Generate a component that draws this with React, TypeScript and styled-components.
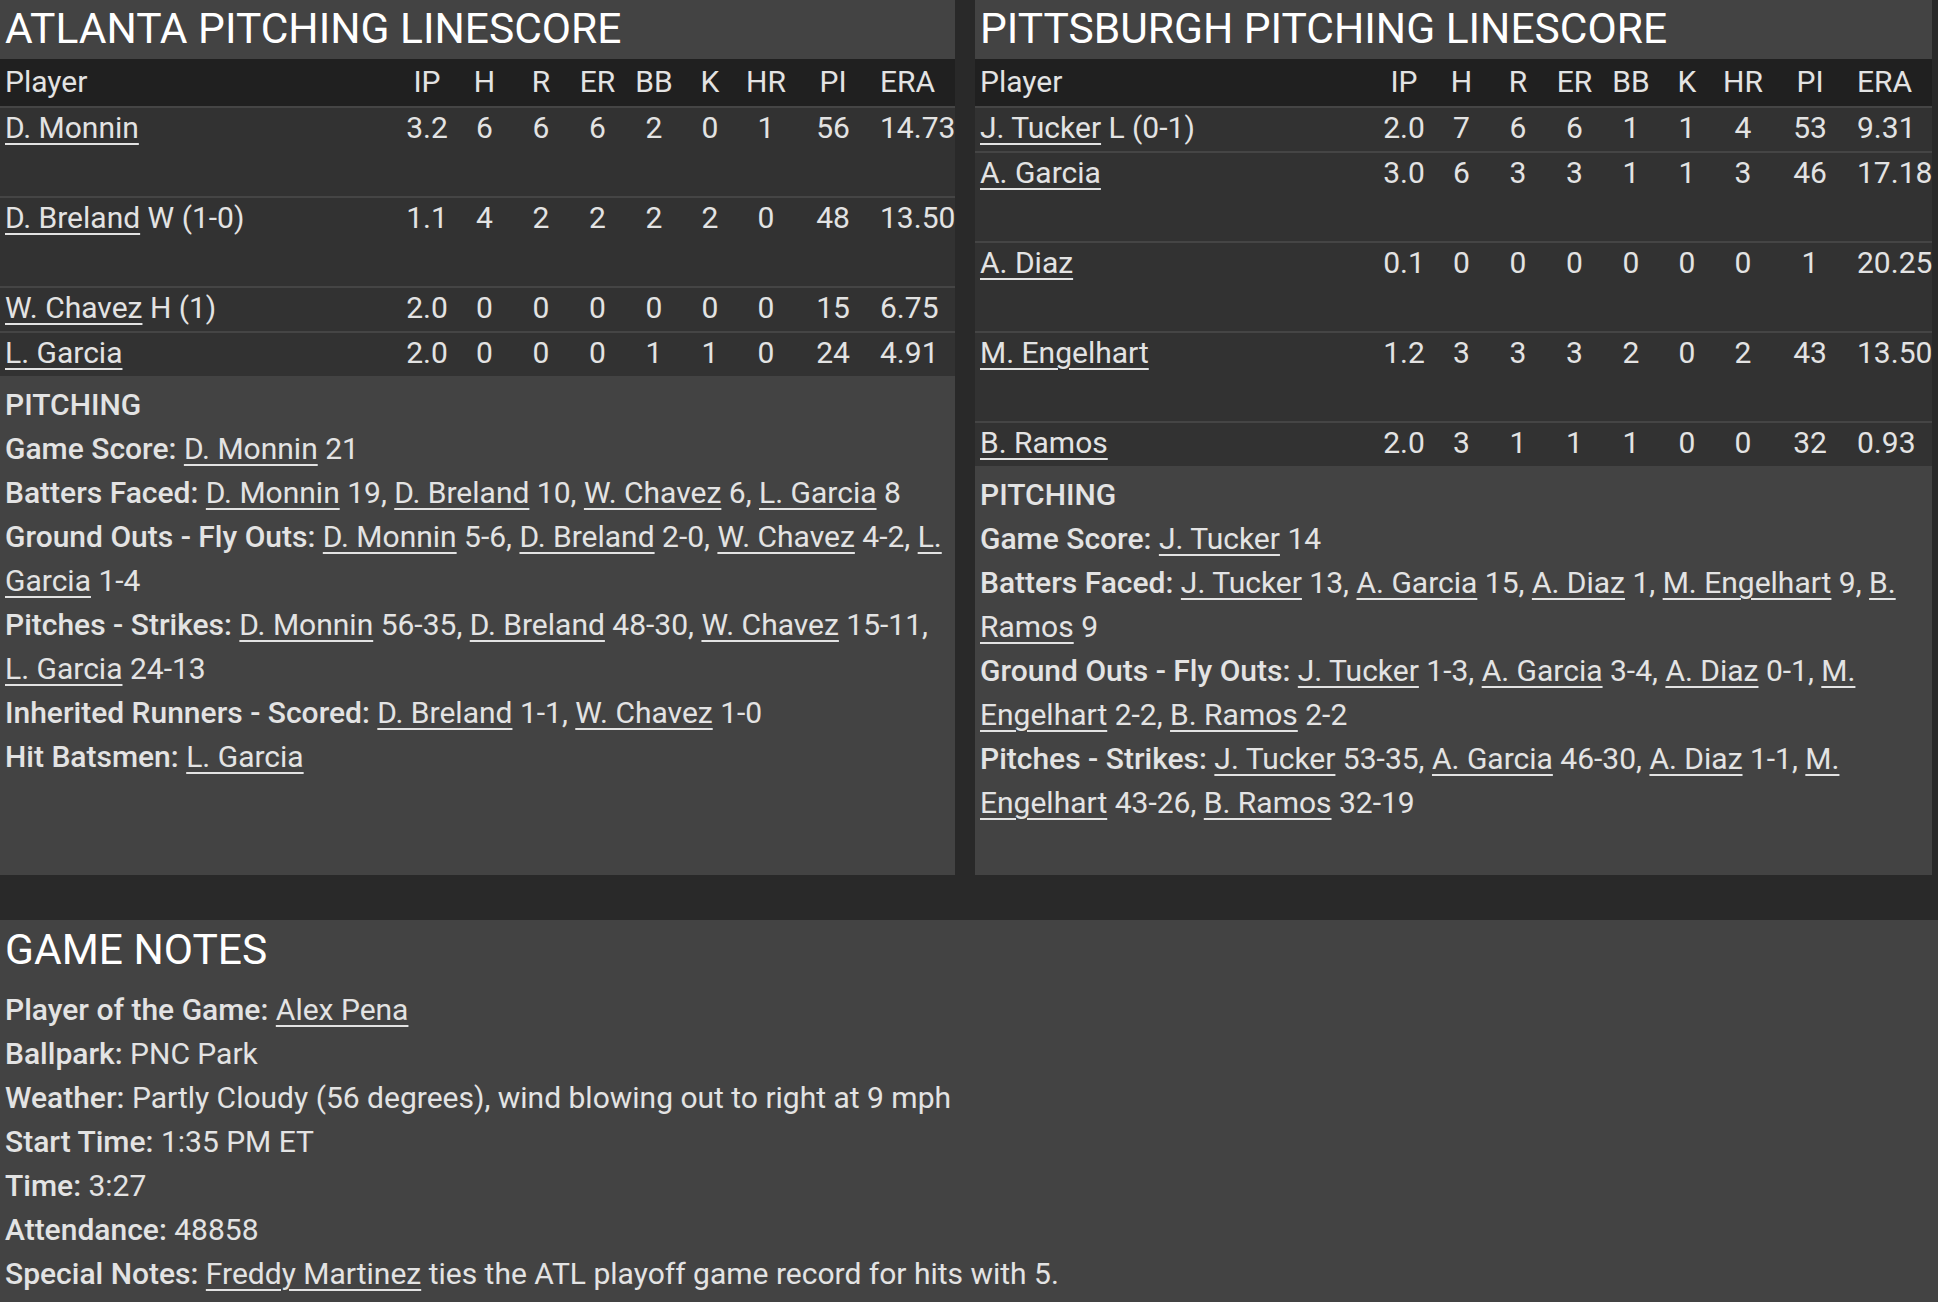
import React from "react";
import styled, { createGlobalStyle } from "styled-components";

type Pitcher = {
  name: string;
  decision?: string;
  stats: string[];
  lines: number;
};

type Note = {
  label: string;
  entries: [string, string][];
};

const columns = ["IP", "H", "R", "ER", "BB", "K", "HR", "PI", "ERA"];

const atlanta: Pitcher[] = [
  { name: "D. Monnin", stats: ["3.2", "6", "6", "6", "2", "0", "1", "56", "14.73"], lines: 2 },
  { name: "D. Breland", decision: "W (1-0)", stats: ["1.1", "4", "2", "2", "2", "2", "0", "48", "13.50"], lines: 2 },
  { name: "W. Chavez", decision: "H (1)", stats: ["2.0", "0", "0", "0", "0", "0", "0", "15", "6.75"], lines: 1 },
  { name: "L. Garcia", stats: ["2.0", "0", "0", "0", "1", "1", "0", "24", "4.91"], lines: 1 },
];

const pittsburgh: Pitcher[] = [
  { name: "J. Tucker", decision: "L (0-1)", stats: ["2.0", "7", "6", "6", "1", "1", "4", "53", "9.31"], lines: 1 },
  { name: "A. Garcia", stats: ["3.0", "6", "3", "3", "1", "1", "3", "46", "17.18"], lines: 2 },
  { name: "A. Diaz", stats: ["0.1", "0", "0", "0", "0", "0", "0", "1", "20.25"], lines: 2 },
  { name: "M. Engelhart", stats: ["1.2", "3", "3", "3", "2", "0", "2", "43", "13.50"], lines: 2 },
  { name: "B. Ramos", stats: ["2.0", "3", "1", "1", "1", "0", "0", "32", "0.93"], lines: 1 },
];

const atlantaNotes: Note[] = [
  { label: "Game Score:", entries: [["D. Monnin", "21"]] },
  {
    label: "Batters Faced:",
    entries: [["D. Monnin", "19"], ["D. Breland", "10"], ["W. Chavez", "6"], ["L. Garcia", "8"]],
  },
  {
    label: "Ground Outs - Fly Outs:",
    entries: [["D. Monnin", "5-6"], ["D. Breland", "2-0"], ["W. Chavez", "4-2"], ["L. Garcia", "1-4"]],
  },
  {
    label: "Pitches - Strikes:",
    entries: [["D. Monnin", "56-35"], ["D. Breland", "48-30"], ["W. Chavez", "15-11"], ["L. Garcia", "24-13"]],
  },
  { label: "Inherited Runners - Scored:", entries: [["D. Breland", "1-1"], ["W. Chavez", "1-0"]] },
  { label: "Hit Batsmen:", entries: [["L. Garcia", ""]] },
];

const pittsburghNotes: Note[] = [
  { label: "Game Score:", entries: [["J. Tucker", "14"]] },
  {
    label: "Batters Faced:",
    entries: [["J. Tucker", "13"], ["A. Garcia", "15"], ["A. Diaz", "1"], ["M. Engelhart", "9"], ["B. Ramos", "9"]],
  },
  {
    label: "Ground Outs - Fly Outs:",
    entries: [["J. Tucker", "1-3"], ["A. Garcia", "3-4"], ["A. Diaz", "0-1"], ["M. Engelhart", "2-2"], ["B. Ramos", "2-2"]],
  },
  {
    label: "Pitches - Strikes:",
    entries: [["J. Tucker", "53-35"], ["A. Garcia", "46-30"], ["A. Diaz", "1-1"], ["M. Engelhart", "43-26"], ["B. Ramos", "32-19"]],
  },
];

const GlobalStyle = createGlobalStyle`
  html, body {
    margin: 0;
    padding: 0;
    background: #292929;
  }
  body {
    font-family: Roboto, "Noto Sans", sans-serif;
    color: #e3e3e3;
    -webkit-font-smoothing: antialiased;
  }
`;

const Page = styled.div`
  width: 1938px;
  min-height: 1302px;
  background: #292929;
`;

const Linescores = styled.div`
  display: grid;
  grid-template-columns: 955px 957px;
  column-gap: 20px;
  height: 875px;
`;

const Panel = styled.section`
  display: flex;
  flex-direction: column;
  background: #333333;
`;

const PanelTitle = styled.h2`
  margin: 0;
  height: 59px;
  padding: 0 5px;
  background: #434343;
  color: #ffffff;
  font-size: 42.5px;
  font-weight: 400;
  line-height: 57px;
  white-space: nowrap;
`;

const StatRow = styled.div<{ $header?: boolean; $lines?: number }>`
  display: grid;
  grid-template-columns: 1fr 58px 57px 56px 57px 56px 56px 56px 78px 83px;
  height: ${(p) => (p.$header ? 47 : (p.$lines || 1) * 45 - 2)}px;
  background: ${(p) => (p.$header ? "#202020" : "#323232")};
  border-top: ${(p) => (p.$header ? "none" : "2px solid #454545")};
  font-size: 30px;
  line-height: ${(p) => (p.$header ? "45px" : "40px")};
  color: #e3e3e3;
`;

const NameCell = styled.div`
  padding-left: 5px;
  white-space: nowrap;
`;

const StatCell = styled.div<{ $left?: boolean }>`
  text-align: ${(p) => (p.$left ? "left" : "center")};
  padding-left: ${(p) => (p.$left ? "8px" : "0")};
  white-space: nowrap;
`;

const PlayerLink = styled.a`
  color: inherit;
  text-decoration: underline;
  text-decoration-thickness: 2px;
  text-underline-offset: 5px;
`;

const Notes = styled.div`
  flex: 1;
  background: #434343;
  padding: 7px 5px 50px;
  font-size: 30px;
  line-height: 44px;
`;

const NoteHeading = styled.div`
  font-weight: 500;
  text-transform: uppercase;
`;

const NoteLine = styled.div``;

const Label = styled.span`
  font-weight: 500;
`;

const Band = styled.div`
  height: 45px;
  background: #292929;
`;

const GameNotes = styled.section`
  background: #434343;
  padding: 0 5px 20px;
  font-size: 30px;
  line-height: 44px;
  min-height: 382px;
  box-sizing: border-box;
`;

const GameNotesTitle = styled.h2`
  margin: 0 0 9px;
  height: 59px;
  color: #ffffff;
  font-size: 42.5px;
  font-weight: 400;
  line-height: 59px;
`;

const PitchingTable: React.FC<{ title: string; pitchers: Pitcher[]; notes: Note[] }> = ({
  title,
  pitchers,
  notes,
}) => (
  <Panel>
    <PanelTitle>{title}</PanelTitle>
    <StatRow $header>
      <NameCell>Player</NameCell>
      {columns.map((c) => (
        <StatCell key={c} $left={c === "ERA"}>
          {c}
        </StatCell>
      ))}
    </StatRow>
    {pitchers.map((p) => (
      <StatRow key={p.name} $lines={p.lines}>
        <NameCell>
          <PlayerLink>{p.name}</PlayerLink>
          {p.decision ? ` ${p.decision}` : ""}
        </NameCell>
        {p.stats.map((s, i) => (
          <StatCell key={i} $left={i === p.stats.length - 1}>
            {s}
          </StatCell>
        ))}
      </StatRow>
    ))}
    <Notes>
      <NoteHeading>Pitching</NoteHeading>
      {notes.map((n) => (
        <NoteLine key={n.label}>
          <Label>{n.label}</Label>{" "}
          {n.entries.map(([name, value], i) => (
            <React.Fragment key={name}>
              <PlayerLink>{name}</PlayerLink>
              {value ? ` ${value}` : ""}
              {i < n.entries.length - 1 ? ", " : ""}
            </React.Fragment>
          ))}
        </NoteLine>
      ))}
    </Notes>
  </Panel>
);

const App: React.FC = () => (
  <Page>
    <GlobalStyle />
    <Linescores>
      <PitchingTable title="ATLANTA PITCHING LINESCORE" pitchers={atlanta} notes={atlantaNotes} />
      <PitchingTable title="PITTSBURGH PITCHING LINESCORE" pitchers={pittsburgh} notes={pittsburghNotes} />
    </Linescores>
    <Band />
    <GameNotes>
      <GameNotesTitle>GAME NOTES</GameNotesTitle>
      <NoteLine>
        <Label>Player of the Game:</Label> <PlayerLink>Alex Pena</PlayerLink>
      </NoteLine>
      <NoteLine>
        <Label>Ballpark:</Label> PNC Park
      </NoteLine>
      <NoteLine>
        <Label>Weather:</Label> Partly Cloudy (56 degrees), wind blowing out to right at 9 mph
      </NoteLine>
      <NoteLine>
        <Label>Start Time:</Label> 1:35 PM ET
      </NoteLine>
      <NoteLine>
        <Label>Time:</Label> 3:27
      </NoteLine>
      <NoteLine>
        <Label>Attendance:</Label> 48858
      </NoteLine>
      <NoteLine>
        <Label>Special Notes:</Label> <PlayerLink>Freddy Martinez</PlayerLink> ties the ATL playoff game
        record for hits with 5.
      </NoteLine>
    </GameNotes>
  </Page>
);

export default App;
